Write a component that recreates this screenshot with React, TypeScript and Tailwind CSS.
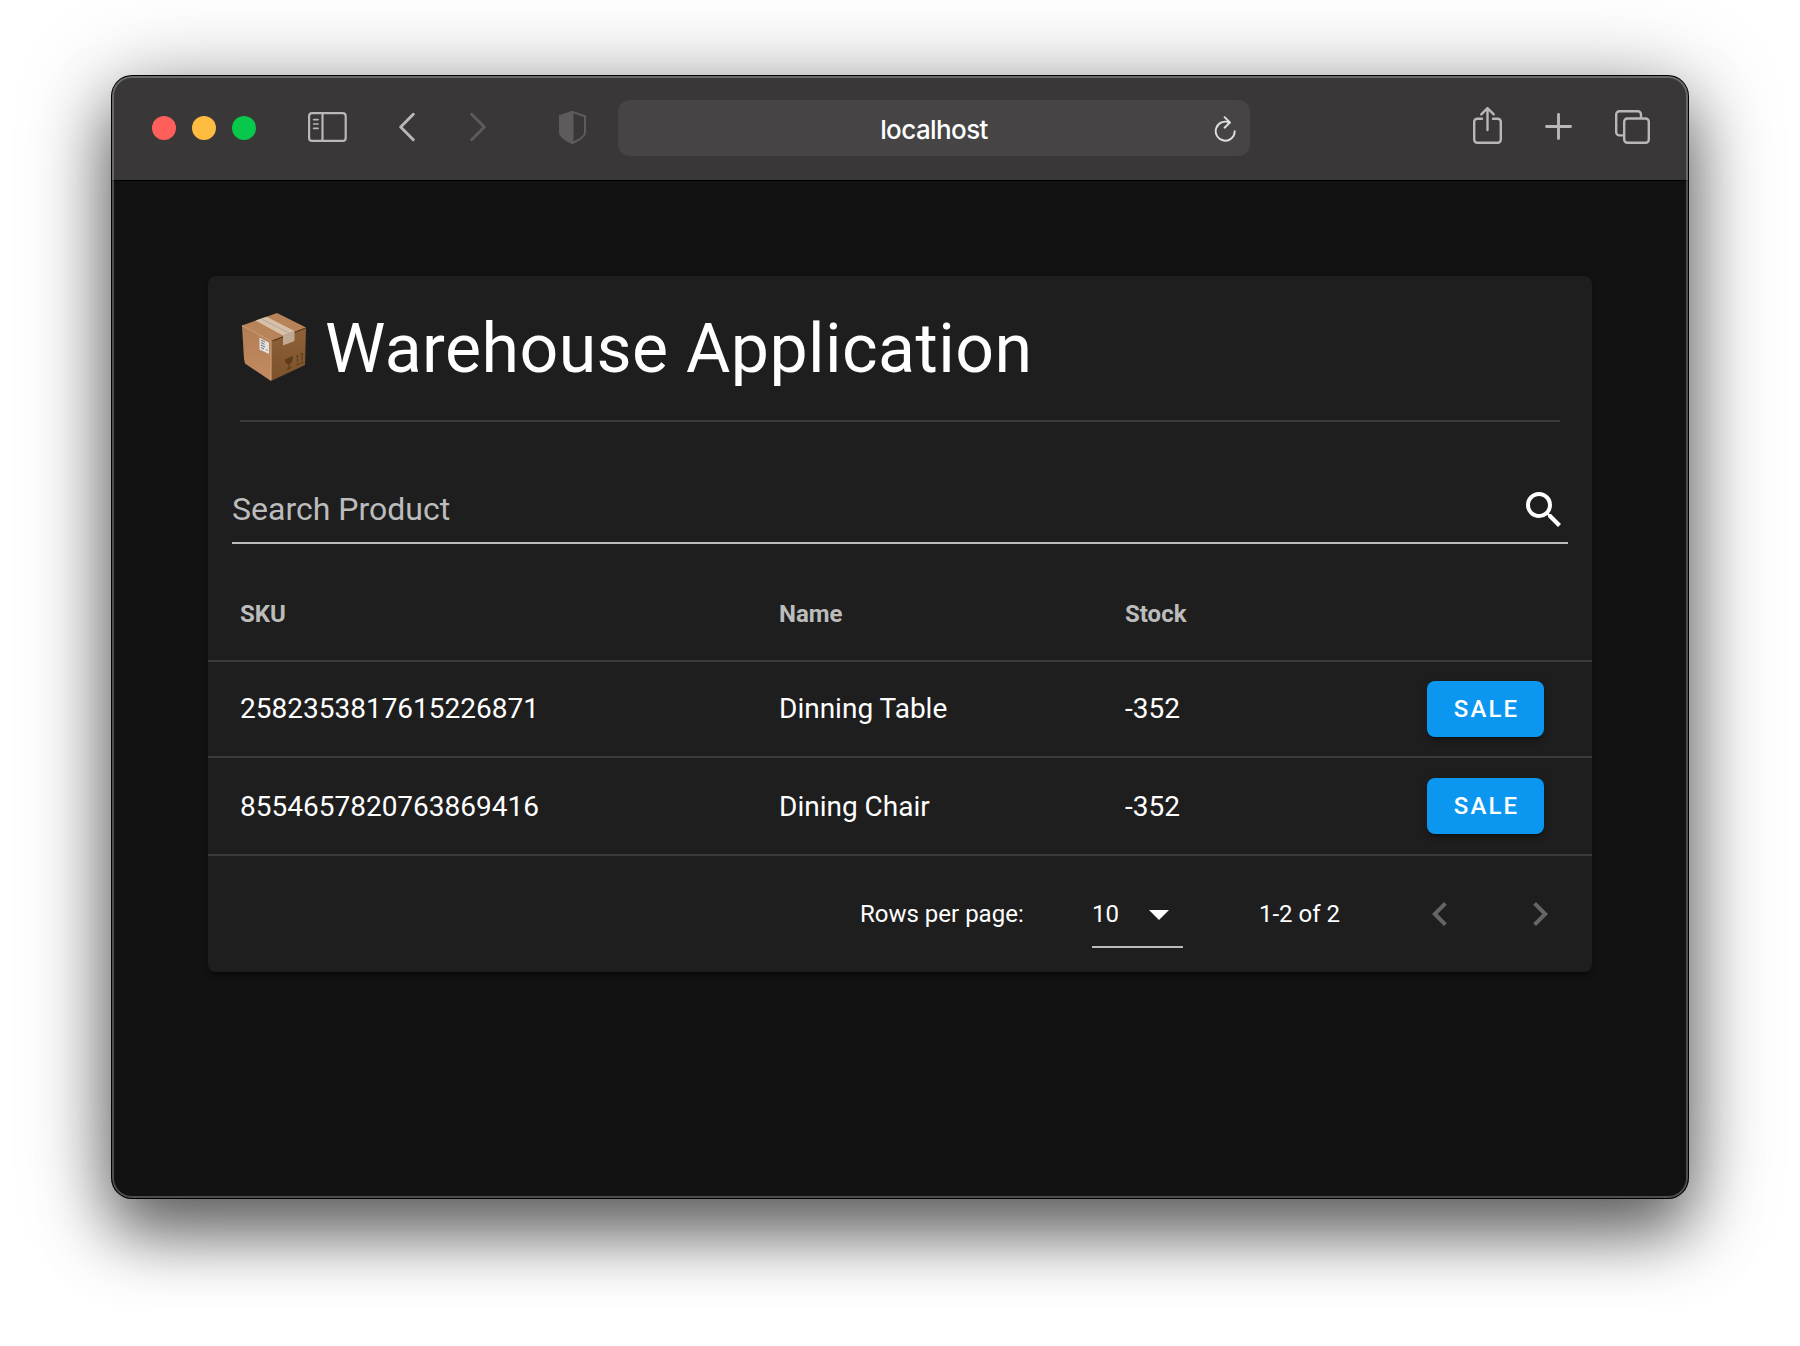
import React from "react";

const rows = [
  { sku: "2582353817615226871", name: "Dinning Table", stock: "-352", height: "h-24", text: "" },
  { sku: "8554657820763869416", name: "Dining Chair", stock: "-352", height: "h-[98px]", text: "pt-0.5" },
];

function Toolbar() {
  return (
    <header className="flex h-[105px] shrink-0 items-start border-b border-black bg-[#393738] pl-10 text-[#b9b7b8]">
      <div className="mt-10 flex gap-4">
        <span className="size-6 rounded-full bg-[#ff5f5a]" />
        <span className="size-6 rounded-full bg-[#ffbc40]" />
        <span className="size-6 rounded-full bg-[#06c84b]" />
      </div>
      <svg className="ml-[52px] mt-9 h-[30px] w-[39px]" viewBox="0 0 39 30" fill="none" stroke="currentColor" strokeWidth="2.2">
        <rect x="1.1" y="1.1" width="36.600" height="27.800" rx="3" />
        <path d="M14.500 1v28" />
        <path d="M5.700 7.600h4.300M5.700 12h4.300M5.700 16.400h4.300" strokeWidth="1.700" strokeLinecap="round" />
      </svg>
      <svg className="ml-[52px] mt-9 h-[30px] w-4" viewBox="0 0 16 30" fill="none" stroke="currentColor" strokeWidth="2.900" strokeLinecap="round" strokeLinejoin="round">
        <path d="M14.300 2.300 1.700 15l12.600 12.700" />
      </svg>
      <svg className="ml-[55px] mt-9 h-[30px] w-4 text-[#5d5b5c]" viewBox="0 0 16 30" fill="none" stroke="currentColor" strokeWidth="2.900" strokeLinecap="round" strokeLinejoin="round">
        <path d="M1.700 2.300 14.300 15 1.700 27.700" />
      </svg>
      <svg className="ml-[73px] mt-[35px] h-[33px] w-[27px] text-[#5d5b5c]" viewBox="0 0 27 33" fill="none" stroke="currentColor" strokeWidth="2" strokeLinejoin="round">
        <path d="M13.500 1 26 5.300v16.200c0 4-6.500 7.800-12.500 10.500C7.500 29.300 1 25.500 1 21.500V5.300z" />
        <path d="M13.500 1 1 5.300v16.200c0 4 6.500 7.800 12.500 10.500z" fill="currentColor" />
      </svg>
      <div className="ml-8 mt-6 flex h-14 w-[632px] items-center rounded-xl bg-[#464445] pl-9 pr-[13px]">
        <span className="flex-1 pt-[3px] text-center font-['Inter'] text-[26px] font-medium leading-8 tracking-[-0.6px] text-white">localhost</span>
        <svg className="mt-0.5 h-[26px] w-[23px] text-[#dfdede]" viewBox="0 0 23 26" fill="none" stroke="currentColor" strokeWidth="1.900" strokeLinecap="round" strokeLinejoin="round">
          <path d="M20.700 15.200a9.500 9.500 0 1 1-5.200-8.500" />
          <path d="M10.600 1.200l5.300 5.300-5.300 5.200" />
        </svg>
      </div>
      <svg className="ml-[223px] mt-[31px] h-[37px] w-[29px]" viewBox="0 0 29 37" fill="none" stroke="currentColor" strokeWidth="2.400" strokeLinecap="round" strokeLinejoin="round">
        <path d="M9 11.700H4.200a3 3 0 0 0-3 3v18a3 3 0 0 0 3 3h20.600a3 3 0 0 0 3-3v-18a3 3 0 0 0-3-3H20" />
        <path d="M14.500 23V1.500M8.300 7.300l6.200-6.100 6.200 6.100" />
      </svg>
      <svg className="ml-[43px] mt-[37px] size-[27px]" viewBox="0 0 27 27" fill="none" stroke="currentColor" strokeWidth="2.900" strokeLinecap="round">
        <path d="M13.500 1.500v24M1.500 13.500h24" />
      </svg>
      <svg className="ml-[43px] mt-[34px] h-[34px] w-[35px]" viewBox="0 0 35 34" fill="none" stroke="currentColor" strokeWidth="2.400">
        <path d="M26 8.200V4.400a3.200 3.200 0 0 0-3.200-3.200H4.400a3.200 3.200 0 0 0-3.200 3.200v17.800a3.200 3.200 0 0 0 3.200 3.200h4" />
        <rect x="9.200" y="8.500" width="24.600" height="24.300" rx="3.200" />
      </svg>
    </header>
  );
}

function PackageIcon() {
  return (
    <svg className="-mt-0.5 h-[68px] w-16" viewBox="0 0 64 68">
      <defs>
        <linearGradient id="left" x1="0" y1="0" x2="0" y2="1">
          <stop offset="0" stopColor="#b47e55" />
          <stop offset="1" stopColor="#c28b61" />
        </linearGradient>
        <linearGradient id="right" x1="0" y1="0" x2="0" y2="1">
          <stop offset="0" stopColor="#8f6139" />
          <stop offset="1" stopColor="#7b522a" />
        </linearGradient>
      </defs>
      <path d="M0 12.500 35 0l29 14.500L29 28z" fill="#b9835a" />
      <path d="M0 12.500 29 28v40L3 50.500 2 46z" fill="url(#left)" />
      <path d="M29 28l35-13.500-1 37.500-34 16z" fill="url(#right)" />
      <path d="M0 12.500 29 28" fill="none" stroke="#d0a078" strokeWidth="1" />
      <path d="M29 28v39" stroke="#d19c70" strokeWidth="1.200" />
      <path d="M31 27.800 63.500 15.200" stroke="#553719" strokeWidth="1" />
      <path d="M13.500 7.500 24.500 3.700 52.500 18 41 22.500z" fill="#d6c0aa" />
      <path d="M41 22.500 52.500 18v10L41 32.500z" fill="#c2aa92" />
      <path d="M19 5.800 47 20" stroke="#bba58f" strokeWidth="1" />
      <path d="M17.500 24.500 27 29.500V41l-9.500-4.500z" fill="#dfe0df" />
      <path d="M19 27l4 2M19 29.500l3.500 1.800M19 32l4 2M19 34.500l3 1.500" stroke="#74716d" strokeWidth="1" />
      <path d="M24 36.500l2 1" stroke="#9a9894" strokeWidth="1" />
      <path d="M43 46.500l8-3.500c0 5-1.500 7-4 8.200-2.500.5-4-1-4-4.700z" fill="#5a3b1c" />
      <path d="M47 50v5.500M44.500 56.500l5-2.200M55.500 42.500v7M60 40.500v7M53.800 52.300l8-3.300M54.500 44l1-2 1 1.300M59 42l1-2 1 1.300" stroke="#5a3b1c" strokeWidth="1" fill="none" />
    </svg>
  );
}

const columns = "grid grid-cols-[539px_346px_302px_1fr] items-center pl-8";

export default function App() {
  return (
    <div className="h-[1346px] w-[1800px] overflow-hidden bg-white px-28 pt-[76px] font-['Roboto',sans-serif] text-white">
      <div className="relative flex h-[1122px] flex-col overflow-hidden rounded-[20px] bg-[#121212] shadow-[0_0_0_1px_#000,0_36px_64px_rgba(0,0,0,0.5),0_10px_90px_rgba(0,0,0,0.36)]">
        <Toolbar />
        <main className="px-24 pt-[95px]">
          <section className="h-[696px] rounded-lg bg-[#1e1e1e] shadow-[0_6px_2px_-4px_rgba(0,0,0,0.2),0_4px_4px_rgba(0,0,0,0.14),0_2px_10px_rgba(0,0,0,0.12)]">
            <div className="px-8">
              <h1 className="flex h-[146px] items-center border-b-2 border-[#393939] pl-0.5 text-[68px] tracking-[0.45px]">
                <PackageIcon />
                <span className="ml-[19px] pt-0.5">Warehouse Application</span>
              </h1>
            </div>
            <div className="mx-6 flex h-[122px] items-end justify-between border-b-2 border-[#bcbcbc] pb-2.5">
              <span className="-mb-px text-[32px] leading-[48px] text-[#bcbcbc]">Search Product</span>
              <svg className="-mb-0.5 size-12" viewBox="0 0 24 24" fill="currentColor">
                <path d="M9.500 3A6.500 6.500 0 0 1 16 9.500c0 1.610-.59 3.090-1.560 4.230l.27.270h.79l5 5-1.500 1.500-5-5v-.79l-.27-.27A6.516 6.516 0 0 1 9.500 16 6.500 6.500 0 0 1 3 9.500 6.500 6.500 0 0 1 9.500 3m0 2C7 5 5 7 5 9.500S7 14 9.500 14 14 12 14 9.500 12 5 9.500 5z" />
              </svg>
            </div>
            <div className={`${columns} h-[118px] border-b-2 border-[#393939] pt-[23px] text-2xl font-bold text-[#bcbcbc]`}>
              <span>SKU</span>
              <span>Name</span>
              <span>Stock</span>
            </div>
            {rows.map((row) => (
              <div key={row.sku} className={`${columns} ${row.height} border-b-2 border-[#393939] text-[28px]`}>
                <span className={row.text}>{row.sku}</span>
                <span className={row.text}>{row.name}</span>
                <span className={row.text}>{row.stock}</span>
                <button className="h-14 w-[117px] rounded-lg bg-[#0b97f0] pl-0.5 text-center text-2xl font-medium tracking-[2.14px] shadow-[0_6px_2px_-4px_rgba(0,0,0,0.2),0_4px_4px_rgba(0,0,0,0.14),0_2px_10px_rgba(0,0,0,0.12)]">
                  SALE
                </button>
              </div>
            ))}
            <footer className="flex h-[116px] items-center pl-[652px] text-2xl">
              <span className="w-[232px]">Rows per page:</span>
              <div className="flex h-[92px] w-[91px] items-center self-start border-b-2 border-[#bcbcbc] pt-[26px]">
                <span className="w-[57px]">10</span>
                <svg className="mt-0.5 h-2.5 w-5" viewBox="0 0 20 10" fill="currentColor">
                  <path d="M0 0h20L10 10z" />
                </svg>
              </div>
              <span className="ml-[76px] w-[157px]">1-2 of 2</span>
              <svg className="size-12 text-[#656565]" viewBox="0 0 24 24" fill="currentColor">
                <path d="M15.410 16.580 10.830 12l4.580-4.590L14 6l-6 6 6 6z" />
              </svg>
              <svg className="ml-[52px] size-12 text-[#656565]" viewBox="0 0 24 24" fill="currentColor">
                <path d="M8.590 16.580 13.170 12 8.590 7.410 10 6l6 6-6 6z" />
              </svg>
            </footer>
          </section>
        </main>
        <div className="pointer-events-none absolute inset-0 rounded-[20px] border-2 border-white/25" />
      </div>
    </div>
  );
}
